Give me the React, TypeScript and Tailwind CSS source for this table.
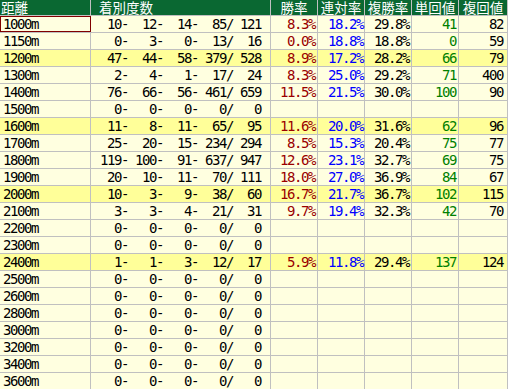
import React from 'react';

type Row = {
  dist: string;
  counts: number[];
  win?: string;
  ren?: string;
  fuku?: string;
  tan?: number;
  fukuKai?: number;
  hl?: boolean;
};

const rows: Row[] = [
  { dist: '1000m', counts: [10, 12, 14, 85, 121], win: '8.3%', ren: '18.2%', fuku: '29.8%', tan: 41, fukuKai: 82 },
  { dist: '1150m', counts: [0, 3, 0, 13, 16], win: '0.0%', ren: '18.8%', fuku: '18.8%', tan: 0, fukuKai: 59 },
  { dist: '1200m', counts: [47, 44, 58, 379, 528], win: '8.9%', ren: '17.2%', fuku: '28.2%', tan: 66, fukuKai: 79, hl: true },
  { dist: '1300m', counts: [2, 4, 1, 17, 24], win: '8.3%', ren: '25.0%', fuku: '29.2%', tan: 71, fukuKai: 400 },
  { dist: '1400m', counts: [76, 66, 56, 461, 659], win: '11.5%', ren: '21.5%', fuku: '30.0%', tan: 100, fukuKai: 90 },
  { dist: '1500m', counts: [0, 0, 0, 0, 0] },
  { dist: '1600m', counts: [11, 8, 11, 65, 95], win: '11.6%', ren: '20.0%', fuku: '31.6%', tan: 62, fukuKai: 96, hl: true },
  { dist: '1700m', counts: [25, 20, 15, 234, 294], win: '8.5%', ren: '15.3%', fuku: '20.4%', tan: 75, fukuKai: 77 },
  { dist: '1800m', counts: [119, 100, 91, 637, 947], win: '12.6%', ren: '23.1%', fuku: '32.7%', tan: 69, fukuKai: 75 },
  { dist: '1900m', counts: [20, 10, 11, 70, 111], win: '18.0%', ren: '27.0%', fuku: '36.9%', tan: 84, fukuKai: 67 },
  { dist: '2000m', counts: [10, 3, 9, 38, 60], win: '16.7%', ren: '21.7%', fuku: '36.7%', tan: 102, fukuKai: 115, hl: true },
  { dist: '2100m', counts: [3, 3, 4, 21, 31], win: '9.7%', ren: '19.4%', fuku: '32.3%', tan: 42, fukuKai: 70 },
  { dist: '2200m', counts: [0, 0, 0, 0, 0] },
  { dist: '2300m', counts: [0, 0, 0, 0, 0] },
  { dist: '2400m', counts: [1, 1, 3, 12, 17], win: '5.9%', ren: '11.8%', fuku: '29.4%', tan: 137, fukuKai: 124, hl: true },
  { dist: '2500m', counts: [0, 0, 0, 0, 0] },
  { dist: '2600m', counts: [0, 0, 0, 0, 0] },
  { dist: '2800m', counts: [0, 0, 0, 0, 0] },
  { dist: '3000m', counts: [0, 0, 0, 0, 0] },
  { dist: '3200m', counts: [0, 0, 0, 0, 0] },
  { dist: '3400m', counts: [0, 0, 0, 0, 0] },
  { dist: '3600m', counts: [0, 0, 0, 0, 0] },
];

// fixed-width record string, e.g. "  10-  12-  14-  85/ 121"
const pad = (n: number) => String(n).padStart(4, ' ');
const record = (c: number[]) =>
  `${pad(c[0])}-${pad(c[1])}-${pad(c[2])}-${pad(c[3])}/${pad(c[4])}`;

const cols = 'grid grid-cols-[91px_180px_47px_47px_47px_47px_49px]';
const cell = 'border-r border-[#c0c0c0] h-full whitespace-pre';

export default function App() {
  return (
    <div className="w-[508px] h-[389px] overflow-hidden bg-[#ffffe0] font-['DejaVu_Sans_Mono',monospace] text-[14px] tracking-[-1.43px] text-black">
      {/* Header */}
      <div className={`${cols} h-[15px] bg-[#0a6832] text-white font-['Noto_Sans_CJK_JP',sans-serif] text-[13.5px] leading-[15px] tracking-normal`}>
        <div className={`${cell} pl-[1px]`}>距離</div>
        <div className={`${cell} pl-[8px]`}>着別度数</div>
        <div className={`${cell} text-center`}>勝率</div>
        <div className={`${cell} text-center`}>連対率</div>
        <div className={`${cell} text-center`}>複勝率</div>
        <div className={`${cell} text-center`}>単回値</div>
        <div className={`${cell} text-center`}>複回値</div>
      </div>

      {rows.map((r, i) => (
        <div
          key={r.dist}
          className={`${cols} h-[17px] border-t border-[#c0c0c0] leading-[16px] ${r.hl ? 'bg-[#ffff99]' : 'bg-[#ffffe0]'}`}
        >
          <div className={`${cell} pl-[3px] ${i === 0 ? 'outline outline-1 -outline-offset-1 outline-[#800000]' : ''}`}>
            {r.dist}
          </div>
          <div className={`${cell} text-right pr-[9px]`}>{record(r.counts)}</div>
          <div className={`${cell} text-right pr-[2px] text-[#990000]`}>{r.win ?? ''}</div>
          <div className={`${cell} text-right pr-[1px] text-[#0000ff]`}>{r.ren ?? ''}</div>
          <div className={`${cell} text-right pr-[2px]`}>{r.fuku ?? ''}</div>
          <div className={`${cell} text-right pr-[2px] text-[#008000]`}>{r.tan ?? ''}</div>
          <div className={`${cell} text-right pr-[4px]`}>{r.fukuKai ?? ''}</div>
        </div>
      ))}
    </div>
  );
}
